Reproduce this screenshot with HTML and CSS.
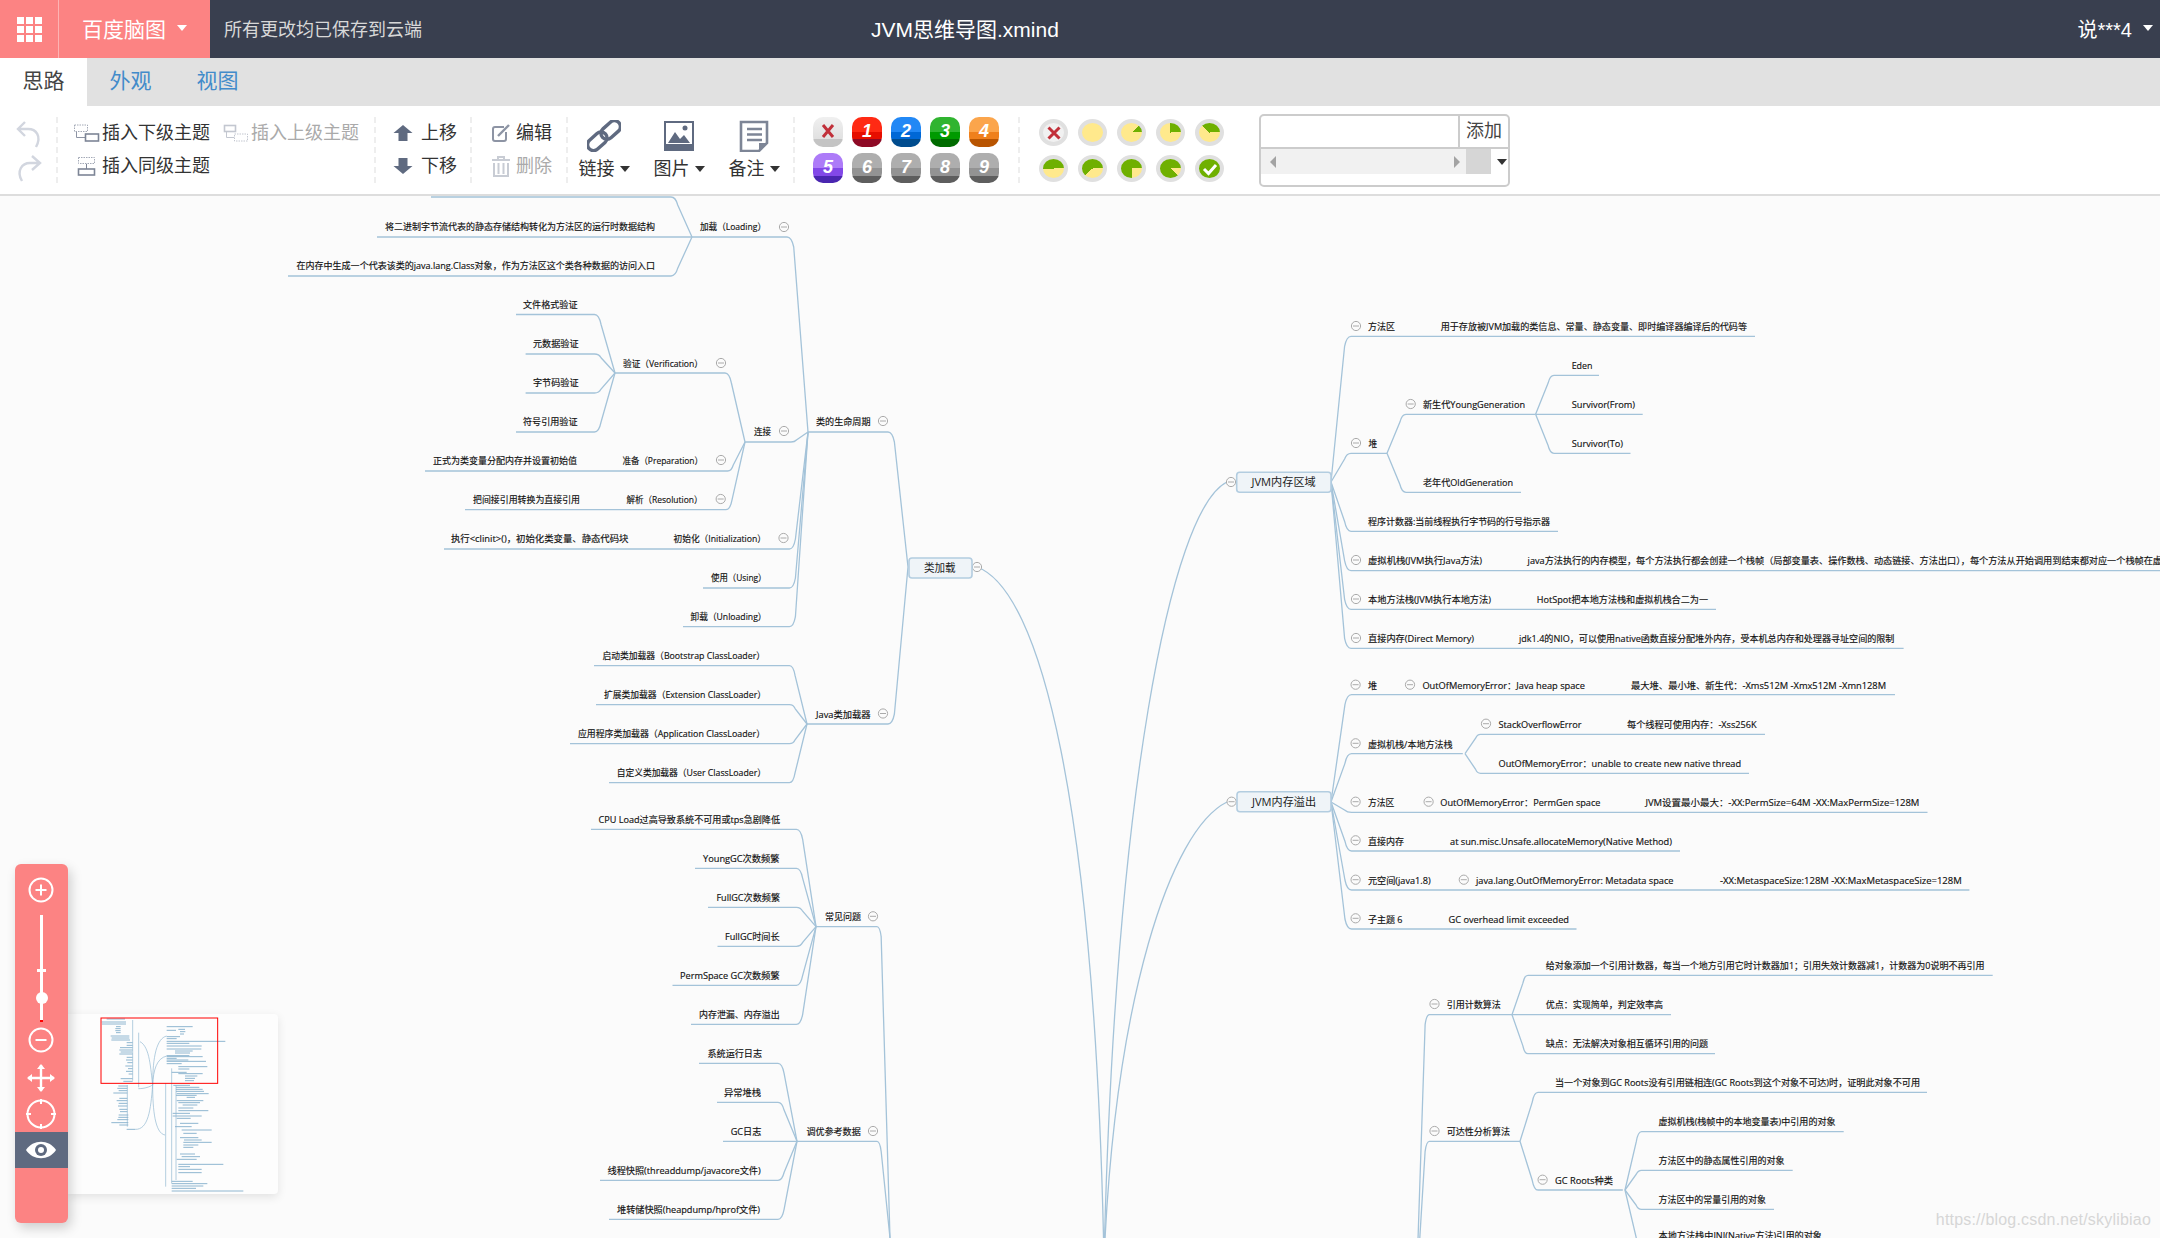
FILE: index.html
```html
<!doctype html>
<html lang="zh-CN">

<head>
  <meta charset="UTF-8">
  <title>JVM思维导图.xmind</title>
  <link rel="stylesheet" href="styles.css">
</head>

<body>
  <header class="header">
    <button class="header__apps" type="button">
      <span class="header__apps-grid">
        <i></i><i></i><i></i><i></i><i></i><i></i><i></i><i></i><i></i>
      </span>
    </button>
    <div class="header__brand">百度脑图<span class="caret caret--white"></span></div>
    <div class="header__saved">所有更改均已保存到云端</div>
    <div class="header__title">JVM思维导图.xmind</div>
    <div class="header__user">说***4<span class="caret caret--white"></span></div>
  </header>

  <nav class="tabs">
    <a class="tabs__item tabs__item--active">思路</a>
    <a class="tabs__item">外观</a>
    <a class="tabs__item">视图</a>
  </nav>

  <section class="toolbar">
    <div class="group group--history">
      <svg class="history-icon" width="26" height="28" viewBox="0 0 26 28" fill="none">
        <path d="M9 2L2 9L9 16M2 9H12C20 9 26 16 20 27" stroke="#d2d6df" stroke-width="2.4" />
      </svg>
      <svg class="history-icon" width="26" height="28" viewBox="0 0 26 28" fill="none">
        <path d="M16 2L24 9L16 16M24 9H14C6 9 0 17 6 27" stroke="#d2d6df" stroke-width="2.4" />
      </svg>
    </div>

    <div class="group group--insert">
      <div class="tool">
        <svg class="tool__icon" width="28" height="20" viewBox="0 0 28 20" fill="none">
          <rect x="1.500" y="2" width="13" height="6.500" stroke="#a3a9b6" stroke-dasharray="1.500 1" />
          <path d="M3.500 9V14.500H12" stroke="#8d94a4" />
          <rect x="12.500" y="11" width="13" height="7" stroke="#7d8596" stroke-width="1.600" />
        </svg>
        插入下级主题
      </div>
      <div class="tool tool--off">
        <svg class="tool__icon" width="28" height="20" viewBox="0 0 28 20" fill="none">
          <rect x="2.500" y="2.500" width="11" height="6" stroke="#c3c7d0" stroke-width="1.600" />
          <path d="M4.500 9V14.500H12" stroke="#c3c7d0" />
          <rect x="12.500" y="11" width="13" height="7" stroke="#c3c7d0" stroke-dasharray="1.500 1" />
        </svg>
        插入上级主题
      </div>
      <div class="tool">
        <svg class="tool__icon" width="28" height="20" viewBox="0 0 28 20" fill="none">
          <rect x="5.500" y="1.500" width="16" height="6" stroke="#a3a9b6" stroke-dasharray="1.500 1" />
          <path d="M13.500 8V13" stroke="#7d8596" />
          <rect x="5.500" y="13" width="16" height="6" stroke="#7d8596" stroke-width="1.600" />
        </svg>
        插入同级主题
      </div>
    </div>

    <div class="group group--move">
      <div class="tool">
        <svg class="tool__icon" width="20" height="16" viewBox="0 0 20 16">
          <path d="M10 0L19.500 8H14.500V16H5.500V8H0.500Z" fill="#5f6a80" />
        </svg>
        上移
      </div>
      <div class="tool">
        <svg class="tool__icon" width="20" height="16" viewBox="0 0 20 16">
          <path d="M10 16L19.500 8H14.500V0H5.500V8H0.500Z" fill="#5f6a80" />
        </svg>
        下移
      </div>
    </div>

    <div class="group group--edit">
      <div class="tool">
        <svg class="tool__icon" width="22" height="20" viewBox="0 0 22 20" fill="none">
          <path d="M14 4H5Q3 4 3 6V16Q3 18 5 18H14Q16 18 16 16V9" stroke="#8d94a4" stroke-width="2" />
          <path d="M8 13L19 2" stroke="#8d94a4" stroke-width="2.400" />
        </svg>
        编辑
      </div>
      <div class="tool tool--off">
        <svg class="tool__icon" width="22" height="22" viewBox="0 0 22 22" fill="none">
          <path d="M2 5H20M8 5V2H14V5M4 8V21H18V8M8.500 8V19M13.500 8V19" stroke="#c8ccd4" stroke-width="2" />
        </svg>
        删除
      </div>
    </div>

    <div class="group group--insert-big">
      <div class="big-tool">
        <svg class="big-tool__icon" width="34" height="32" viewBox="0 0 34 32" fill="none">
          <rect x="-11" y="-6" width="22" height="12" rx="6" transform="translate(10.300 21.300) rotate(-42)" stroke="#5f6a80" stroke-width="3.400" />
          <rect x="-11" y="-6" width="22" height="12" rx="6" transform="translate(23.700 10) rotate(-42)" stroke="#5f6a80" stroke-width="3.400" />
        </svg>
        <span class="big-tool__label">链接<span class="caret"></span></span>
      </div>
      <div class="big-tool">
        <svg class="big-tool__icon" width="30" height="32" viewBox="0 0 30 32">
          <path d="M0 1H30V31H0Z" fill="#5f6a80" />
          <path d="M2 3H28V24H2Z" fill="#fff" />
          <path d="M4 23L11 12L16 19L20 15L26 23Z" fill="#5f6a80" />
          <circle cx="21" cy="8" r="2.500" fill="#5f6a80" />
        </svg>
        <span class="big-tool__label">图片<span class="caret"></span></span>
      </div>
      <div class="big-tool">
        <svg class="big-tool__icon" width="30" height="32" viewBox="0 0 30 32" fill="none">
          <path d="M2 2H28V23L20 31H2Z" stroke="#7d8596" stroke-width="2.600" />
          <path d="M20 31V23H28Z" fill="#7d8596" />
          <path d="M8 9H23M8 14.500H23M8 20H23" stroke="#7d8596" stroke-width="2.600" />
        </svg>
        <span class="big-tool__label">备注<span class="caret"></span></span>
      </div>
    </div>

    <div class="group group--priority">
      <span class="priority priority--none">
        <svg width="14" height="16" viewBox="0 0 14 16" fill="none">
          <path d="M2 2L12 14M12 2L2 14" stroke="#c1303a" stroke-width="3" />
        </svg>
      </span>
      <span class="priority priority--red">1</span>
      <span class="priority priority--blue">2</span>
      <span class="priority priority--green">3</span>
      <span class="priority priority--orange">4</span>
      <span class="priority priority--purple">5</span>
      <span class="priority priority--grey">6</span>
      <span class="priority priority--grey">7</span>
      <span class="priority priority--grey">8</span>
      <span class="priority priority--grey">9</span>
    </div>

    <div class="group group--progress">
      <span class="progress progress--none">
        <svg width="16" height="16" viewBox="0 0 16 16" fill="none">
          <path d="M2.500 2.500L13.500 13.500M13.500 2.500L2.500 13.500" stroke="#c1303a" stroke-width="3" />
        </svg>
      </span>
      <span class="progress"></span>
      <span class="progress progress--45"></span>
      <span class="progress progress--90"></span>
      <span class="progress progress--135"></span>
      <span class="progress progress--180"></span>
      <span class="progress progress--225"></span>
      <span class="progress progress--270"></span>
      <span class="progress progress--315"></span>
      <span class="progress progress--done">
        <svg width="16" height="14" viewBox="0 0 16 14" fill="none">
          <path d="M2 7L6.500 11.500L14 3" stroke="#fff" stroke-width="3" />
        </svg>
      </span>
    </div>

    <div class="resource">
      <div class="resource__top">
        <div class="resource__input"></div>
        <div class="resource__add">添加</div>
      </div>
      <div class="resource__list">
        <div class="resource__track">
          <span class="resource__arrow resource__arrow--left"></span>
          <span class="resource__arrow resource__arrow--right"></span>
        </div>
        <div class="resource__thumb"></div>
        <div class="resource__drop"><span class="caret"></span></div>
      </div>
    </div>
  </section>

  <main class="canvas">
    <svg class="map" id="js-map" width="2160" height="1042" viewBox="0 196 2160 1042"></svg>

    <div class="watermark">https://blog.csdn.net/skylibiao</div>

    <div class="minimap">
      <svg id="js-minimap" width="210" height="180" viewBox="204 492 630 540"></svg>
    </div>

    <div class="nav">
      <button class="nav__btn nav__btn--first" type="button">
        <svg width="30" height="30" viewBox="0 0 30 30" fill="none">
          <circle cx="15" cy="15" r="11.500" stroke="#fff" stroke-width="2" />
          <path d="M9.500 15H20.500M15 9.500V20.500" stroke="#fff" stroke-width="2" />
        </svg>
      </button>
      <div class="nav__slider">
        <span class="nav__tick"></span>
        <span class="nav__knob"></span>
        <span class="nav__tail"></span>
      </div>
      <button class="nav__btn" type="button">
        <svg width="30" height="30" viewBox="0 0 30 30" fill="none">
          <circle cx="15" cy="15" r="11.500" stroke="#fff" stroke-width="2" />
          <path d="M9.500 15H20.500" stroke="#fff" stroke-width="2" />
        </svg>
      </button>
      <button class="nav__btn nav__btn--move" type="button">
        <svg width="32" height="32" viewBox="0 0 32 32" fill="none">
          <path d="M16 3V29M3 16H29" stroke="#fff" stroke-width="2.400" />
          <path d="M12 7L16 2L20 7ZM12 25L16 30L20 25ZM7 12L2 16L7 20ZM25 12L30 16L25 20Z" fill="#fff" />
        </svg>
      </button>
      <button class="nav__btn" type="button">
        <svg width="32" height="32" viewBox="0 0 32 32" fill="none">
          <circle cx="16" cy="16" r="13.500" stroke="#fff" stroke-width="2" />
          <path d="M16 1V6M16 26V31M1 16H6M26 16H31" stroke="#fff" stroke-width="2" />
        </svg>
      </button>
      <button class="nav__btn nav__btn--eye" type="button">
        <svg width="32" height="24" viewBox="0 0 32 24">
          <path d="M1 12C8 1 24 1 31 12C24 23 8 23 1 12Z" fill="#fff" />
          <circle cx="16" cy="12" r="6" fill="#5f6a80" />
          <circle cx="16" cy="12" r="3" fill="#fff" />
        </svg>
      </button>
    </div>
  </main>

  <script src="map.js"></script>
</body>

</html>
```

FILE: styles.css
```css
* {
  box-sizing: border-box;
}

html,
body {
  margin: 0;
  height: 100%;
}

body {
  display: flex;
  flex-direction: column;
  overflow: hidden;
  background-color: #fbfbfb;
  color: #333;
  font-family: "Liberation Sans", "Noto Sans CJK SC", sans-serif;
}

button {
  padding: 0;
  border: none;
  background: none;
}

/* header */
.header {
  display: flex;
  flex: none;
  align-items: center;
  height: 58px;
  background-color: #393f4f;
  color: #fff;
}

.header__apps {
  display: flex;
  align-items: center;
  justify-content: center;
  width: 59px;
  height: 100%;
  border-right: 1px solid #fdb3b3;
  background-color: #fc8383;
}

.header__apps-grid {
  display: grid;
  grid-template-columns: repeat(3, 7px);
  gap: 2px;
}

.header__apps-grid i {
  height: 7px;
  background-color: #fff;
}

.header__brand {
  display: flex;
  align-items: center;
  width: 151px;
  height: 100%;
  padding: 0 0 2px 23px;
  background-color: #fc8383;
  font-size: 21px;
}

.header__saved {
  margin: 0 0 2px 14px;
  color: #d8d8d8;
  font-size: 18px;
}

.header__title {
  margin: 0 0 2px 449px;
  font-size: 21px;
}

.header__user {
  display: flex;
  align-items: center;
  margin: 0 0 2px auto;
  padding-right: 7px;
  font-size: 20px;
}

.caret {
  display: inline-block;
  width: 0;
  height: 0;
  margin-left: 5px;
  border-top: 6px solid #333;
  border-right: 5px solid transparent;
  border-left: 5px solid transparent;
}

.caret--white {
  margin-left: 11px;
  border-top-color: #fff;
}

/* tabs */
.tabs {
  display: flex;
  flex: none;
  height: 48px;
  background-color: #e1e1e1;
}

.tabs__item {
  width: 87px;
  color: #428bca;
  font-size: 21px;
  line-height: 46px;
  text-align: center;
}

.tabs__item--active {
  background-color: #fff;
  color: #444;
}

/* toolbar */
.toolbar {
  display: flex;
  flex: none;
  height: 90px;
  padding-top: 11px;
  border-bottom: 2px solid #ddd;
  background-color: #fff;
  font-size: 18px;
  line-height: 1;
}

.group {
  height: 66px;
  border-left: 2px dashed #eee;
}

.group--history {
  display: flex;
  flex-direction: column;
  gap: 6px;
  width: 56px;
  padding: 3px 0 0 16px;
  border-left: none;
}

.group--insert {
  display: grid;
  grid-template-columns: 136px 136px;
  grid-auto-rows: 33px;
  column-gap: 13px;
  width: 318px;
  padding-left: 15px;
}

.group--move,
.group--edit {
  display: grid;
  grid-auto-rows: 33px;
  width: 96px;
}

.group--move {
  padding-left: 17px;
}

.group--move .tool__icon {
  margin-right: 8px;
}

.group--edit {
  padding-left: 18px;
}

.group--edit .tool__icon {
  margin-right: 4px;
}

.tool {
  display: flex;
  align-items: center;
  padding-bottom: 2px;
  color: #333;
  white-space: nowrap;
}

.tool__icon {
  flex: none;
  margin-right: 1px;
}

.tool--off {
  color: #aaa;
}

.group--insert-big {
  display: flex;
  gap: 23px;
  width: 227px;
  padding-left: 10px;
}

.big-tool {
  display: flex;
  flex-direction: column;
  align-items: center;
  width: 52px;
  padding-top: 3px;
}

.big-tool__icon {
  flex: none;
}

.big-tool__label {
  display: flex;
  align-items: center;
  margin-top: 8px;
}

.group--priority {
  display: grid;
  grid-template-columns: repeat(5, 30px);
  grid-auto-rows: 30px;
  gap: 6px 9px;
  width: 225px;
  padding-left: 18px;
}

.priority {
  display: flex;
  align-items: center;
  justify-content: center;
  padding-bottom: 3px;
  border-radius: 10px;
  color: #fff;
  font-size: 18px;
  font-style: italic;
  font-weight: 700;
}

.priority--none {
  background: linear-gradient(#f0f0f0, #e0e0e0 75%, #c4c4c4 75%);
}

.priority--red {
  background: linear-gradient(#ff2a14 50%, #e60e00 50% 75%, #8e0a25 75%);
}

.priority--blue {
  background: linear-gradient(#2288f5 50%, #0068d6 50% 75%, #004c8e 75%);
}

.priority--green {
  background: linear-gradient(#30b430 50%, #009a00 50% 75%, #006b00 75%);
}

.priority--orange {
  background: linear-gradient(#fba54c 50%, #ef801c 50% 75%, #b85400 75%);
}

.priority--purple {
  background: linear-gradient(#ad7bf8 50%, #8248e8 50% 75%, #4a26b0 75%);
}

.priority--grey {
  background: linear-gradient(#aeaeae 50%, #939393 50% 75%, #5e5e5e 75%);
}

.group--progress {
  display: grid;
  grid-template-columns: repeat(5, 29px);
  grid-auto-rows: 27px;
  gap: 9px 10px;
  width: 225px;
  padding: 2px 0 0 19px;
}

.progress {
  display: flex;
  align-items: center;
  justify-content: center;
  border: 4px solid #e0e0e0;
  border-radius: 50%;
  background: #ffe98c;
}

.progress--45 {
  background: conic-gradient(#ffe98c 0 45deg, #6fb000 45deg 90deg, #ffe98c 90deg);
}

.progress--90 {
  background: conic-gradient(#6fb000 0 90deg, #ffe98c 90deg);
}

.progress--135 {
  background: conic-gradient(#6fb000 0 90deg, #ffe98c 90deg 315deg, #6fb000 315deg);
}

.progress--180 {
  background: conic-gradient(#6fb000 0 90deg, #ffe98c 90deg 270deg, #6fb000 270deg);
}

.progress--225 {
  background: conic-gradient(#6fb000 0 90deg, #ffe98c 90deg 225deg, #6fb000 225deg);
}

.progress--270 {
  background: conic-gradient(#6fb000 0 90deg, #ffe98c 90deg 180deg, #6fb000 180deg);
}

.progress--315 {
  background: conic-gradient(#6fb000 0 90deg, #ffe98c 90deg 135deg, #6fb000 135deg);
}

.progress--none {
  background: #f1f1f1;
}

.progress--done {
  background: #6fb000;
}

.resource {
  flex: none;
  width: 251px;
  height: 73px;
  margin: -3px 0 0 16px;
  border: 2px solid #ccc;
  border-radius: 5px;
  background-color: #fff;
}

.resource__top {
  display: flex;
  height: 33px;
  border-bottom: 2px solid #ccc;
}

.resource__input {
  width: 199px;
  border-right: 2px solid #ccc;
}

.resource__add {
  flex: 1;
  color: #444;
  line-height: 31px;
  text-align: center;
}

.resource__list {
  display: flex;
  height: 25px;
}

.resource__track {
  display: flex;
  align-items: center;
  justify-content: space-between;
  width: 205px;
  padding: 0 6px 0 9px;
  background-color: #f1f1f1;
}

.resource__arrow {
  width: 0;
  height: 0;
  border-top: 6px solid transparent;
  border-bottom: 6px solid transparent;
}

.resource__arrow--left {
  border-right: 6px solid #a3a3a3;
}

.resource__arrow--right {
  border-left: 6px solid #a3a3a3;
}

.resource__thumb {
  width: 25px;
  background-color: #d6d6d6;
}

.resource__drop {
  display: flex;
  flex: 1;
  align-items: center;
  justify-content: center;
}

/* mind map */
.canvas {
  position: relative;
  flex: 1;
  overflow: hidden;
  background-color: #fbfbfb;
}

.map {
  display: block;
}

.map-line {
  fill: none;
  stroke: #a4c3d9;
  stroke-width: 1.3;
}

.map-text {
  fill: #111;
  stroke: #111;
  stroke-width: 0.15;
  font-family: "Open Sans", "Noto Sans CJK SC", sans-serif;
  font-size: 9px;
}

.map-toggle {
  fill: #fbfbfb;
  stroke: #aaa;
  stroke-width: 1;
}

.map-box {
  fill: #eff4f8;
  stroke: #b3cde0;
  stroke-width: 1.6;
}

.map-root-text {
  fill: #222;
  font-family: "Open Sans", "Noto Sans CJK SC", sans-serif;
  font-size: 11px;
}

.watermark {
  position: absolute;
  right: 9px;
  bottom: 9px;
  color: #d6d6d6;
  font-size: 16px;
  letter-spacing: 0.2px;
}

/* navigator */
.nav {
  position: absolute;
  top: 668px;
  left: 15px;
  display: flex;
  flex-direction: column;
  align-items: center;
  width: 53px;
  height: 359px;
  border-radius: 6px;
  background-color: #fc8383;
  box-shadow: 3px 5px 12px rgba(0, 0, 0, 0.18);
}

.nav__btn {
  display: flex;
  flex: none;
  align-items: center;
  justify-content: center;
  width: 100%;
  height: 36px;
  padding-right: 1px;
}

.nav__btn--first {
  margin-top: 8px;
}

.nav__btn--move {
  margin-top: 2px;
}

.nav__btn--eye {
  background-color: #5f6a80;
}

.nav__slider {
  position: relative;
  flex: none;
  width: 3px;
  height: 107px;
  margin-top: 7px;
  background-color: #fff;
}

.nav__tick {
  position: absolute;
  top: 54px;
  left: -3px;
  width: 9px;
  height: 3px;
  background-color: #fff;
}

.nav__knob {
  position: absolute;
  top: 77px;
  left: -4.5px;
  width: 12px;
  height: 12px;
  border-radius: 50%;
  background-color: #fff;
}

.nav__tail {
  position: absolute;
  bottom: 0;
  left: 0;
  width: 3px;
  height: 2px;
  background-color: #f00;
}

.minimap {
  position: absolute;
  top: 818px;
  left: 68px;
  width: 210px;
  height: 180px;
  overflow: hidden;
  border-radius: 0 4px 4px 0;
  background-color: #fdfdfd;
  box-shadow: 0 3px 10px rgba(0, 0, 0, 0.1);
}

.minimap svg {
  display: block;
}

.mini-bar {
  fill: none;
  stroke: #8fb6d0;
  stroke-width: 3;
}

.mini-line {
  fill: none;
  stroke: #8fb6d0;
  stroke-width: 2;
}

.mini-view {
  fill: none;
  stroke: #f00;
  stroke-width: 3;
}
```

FILE: map.js
```js
const NS = 'http://www.w3.org/2000/svg';
const map = document.getElementById('js-map');
const mini = document.getElementById('js-minimap');

function add(parent, tag, attrs, text) {
  const el = document.createElementNS(NS, tag);
  Object.keys(attrs).forEach(function (key) {
    el.setAttribute(key, attrs[key]);
  });
  if (text) el.textContent = text;
  parent.appendChild(el);
  return el;
}

// underline from x0 to xc at height y, then a tight corner and a run to the hub
function edge(x0, xc, y, hx, hy) {
  const dx = hx - xc;
  const dy = hy - y;
  if (Math.abs(dy) < 1) return 'M' + x0 + ' ' + y + 'L' + hx + ' ' + hy;
  const s = dy > 0 ? 1 : -1;
  const bend = Math.min(Math.abs(dy) * 0.2, 10) * s;
  return 'M' + x0 + ' ' + y + 'L' + xc + ' ' + y +
    'Q' + (xc + dx * 0.22) + ' ' + y + ' ' + (xc + dx * 0.32) + ' ' + (y + bend) +
    'L' + hx + ' ' + hy;
}

// [hubX, hubY, [[x0, xc, y], ...]]
const branches = [
  [692, 237, [[431, 671, 197], [377, 670, 237], [288, 671, 276]]],
  [808, 432, [[692, 787, 237], [745, 791, 442], [444, 789.5, 549], [703, 789.5, 588], [683, 789.5, 626.7]]],
  [615, 373, [[516, 594.5, 314.5], [525.6, 594.5, 354], [525.6, 594.5, 393], [516, 594.5, 432]]],
  [745, 442, [[615, 725, 373], [425, 727.6, 471], [465, 726, 509.7]]],
  [908, 567, [[808, 888, 432], [807, 888, 724]]],
  [807, 724, [[594, 789.5, 665.7], [596, 789.5, 704.7], [570, 789.5, 743.7], [609, 789.5, 782.7]]],
  [816, 926.7, [[591, 796.4, 829.3], [695, 796.4, 868.3], [708, 796.4, 907.3], [717.5, 796.4, 946.3], [672.5, 796.4, 985.3], [691, 796.4, 1024.3]]],
  [797, 1141.3, [[699, 778, 1063.3], [717, 778, 1102.3], [723, 778, 1141.3], [600, 778, 1180.3], [609, 778, 1219.3]]],
  [890, 1238, [[816, 877, 926.7], [797, 877, 1141.3]]],
  [1331, 482, [[1755, 1351, 336.3], [1387, 1351, 453.3], [1558, 1351, 531.3], [2170, 1351, 570.7], [1716, 1351, 609.3], [1903.6, 1351, 648.3]]],
  [1387, 453.3, [[1535.6, 1406, 414.3], [1521, 1406, 492.3]]],
  [1535.6, 414.3, [[1599, 1554, 375.3], [1642.7, 1554, 414.3], [1630.5, 1554, 453.3]]],
  [1331, 802, [[1895, 1351.5, 694.7], [1462.8, 1351.5, 753.7], [1927.5, 1351.5, 812.3], [1680, 1351.5, 851], [1969.4, 1351.5, 890], [1576.5, 1351.5, 929]]],
  [1465, 753.7, [[1765, 1480.6, 734.3], [1749, 1480.6, 773.3]]],
  [1512, 1014.7, [[1992.7, 1528, 975.3], [1671, 1528, 1014.7], [1715, 1528, 1053.7]]],
  [1520, 1141.3, [[1927, 1538, 1092.3], [1622.8, 1538, 1190]]],
  [1625, 1190, [[1843.7, 1641.6, 1131.7], [1792.7, 1641.6, 1170.3], [1774, 1641.6, 1209.3], [1840, 1641.6, 1248]]],
  [1416, 1300, [[1520, 1429.4, 1141.3], [1512, 1429.4, 1014.7]]]
];

branches.forEach(function (branch) {
  branch[2].forEach(function (line) {
    add(map, 'path', { class: 'map-line', d: edge(line[0], line[1], line[2], branch[0], branch[1]) });
  });
});

// long curves running down to the root topic below the fold
add(map, 'path', { class: 'map-line', d: 'M977 567C1040 590 1095 800 1104 1260' });
add(map, 'path', { class: 'map-line', d: 'M1227 482C1170 510 1115 800 1104 1260' });
add(map, 'path', { class: 'map-line', d: 'M1227 802C1170 830 1115 1000 1104 1260' });

// [text, x start, x end, centre y]
const topics = [
  ['将二进制字节流代表的静态存储结构转化为方法区的运行时数据结构', 385, 655, 227],
  ['在内存中生成一个代表该类的java.lang.Class对象，作为方法区这个类各种数据的访问入口', 296.5, 655, 266],
  ['加载（Loading）', 700, 766, 227],
  ['文件格式验证', 523, 577.5, 305],
  ['元数据验证', 533, 578.5, 344],
  ['字节码验证', 533, 578.5, 383],
  ['符号引用验证', 523, 577.5, 422],
  ['验证（Verification）', 623, 703, 364],
  ['连接', 754, 771, 432],
  ['类的生命周期', 816, 870.5, 422],
  ['正式为类变量分配内存并设置初始值', 433, 577, 461],
  ['准备（Preparation）', 622.5, 703, 461],
  ['把间接引用转换为直接引用', 473, 580, 500],
  ['解析（Resolution）', 626.6, 702.5, 500],
  ['执行<clinit>()，初始化类变量、静态代码块', 451, 628.5, 539],
  ['初始化（Initialization）', 673.6, 766, 539],
  ['使用（Using）', 711, 766.5, 578],
  ['卸载（Unloading）', 690.6, 766.5, 617],
  ['启动类加载器（Bootstrap ClassLoader）', 602.5, 765, 655.7],
  ['扩展类加载器（Extension ClassLoader）', 604, 766, 694.7],
  ['应用程序类加载器（Application ClassLoader）', 578, 765, 733.7],
  ['自定义类加载器（User ClassLoader）', 616.7, 766, 772.7],
  ['Java类加载器', 816, 870.6, 714.7],
  ['CPU Load过高导致系统不可用或tps急剧降低', 598.6, 780, 819.7],
  ['YoungGC次数频繁', 703, 779.6, 858.7],
  ['FullGC次数频繁', 716.4, 780, 897.7],
  ['FullGC时间长', 725, 779.6, 936.7],
  ['PermSpace GC次数频繁', 680, 779.6, 975.7],
  ['内存泄漏、内存溢出', 699, 779.6, 1015],
  ['常见问题', 825, 861, 916.7],
  ['系统运行日志', 707.5, 762, 1054],
  ['异常堆栈', 724, 761, 1093],
  ['GC日志', 730.7, 761.4, 1131.7],
  ['线程快照(threaddump/javacore文件)', 607.5, 760.7, 1170.7],
  ['堆转储快照(heapdump/hprof文件)', 617, 760, 1209.7],
  ['调优参考数据', 806.4, 860.7, 1132],
  ['方法区', 1368, 1395, 327],
  ['用于存放被JVM加载的类信息、常量、静态变量、即时编译器编译后的代码等', 1440.7, 1747, 327],
  ['Eden', 1571.7, 1592.5, 365.7],
  ['Survivor(From)', 1571.7, 1635, 404.7],
  ['Survivor(To)', 1571.7, 1623, 443.7],
  ['新生代YoungGeneration', 1423, 1525, 404.7],
  ['堆', 1368.4, 1377, 443.7],
  ['老年代OldGeneration', 1423, 1513, 482.7],
  ['程序计数器:当前线程执行字节码的行号指示器', 1368, 1550, 522],
  ['虚拟机栈(JVM执行Java方法)', 1368, 1482, 561],
  ['java方法执行的内存模型，每个方法执行都会创建一个栈帧（局部变量表、操作数栈、动态链接、方法出口），每个方法从开始调用到结束都对应一个栈帧在虚', 1527.6, 2162, 561],
  ['本地方法栈(JVM执行本地方法)', 1368, 1491, 600],
  ['HotSpot把本地方法栈和虚拟机栈合二为一', 1536.8, 1708, 600],
  ['直接内存(Direct Memory)', 1368, 1474, 639],
  ['jdk1.4的NIO，可以使用native函数直接分配堆外内存，受本机总内存和处理器寻址空间的限制', 1519, 1894.4, 639],
  ['堆', 1368, 1377, 686],
  ['OutOfMemoryError：Java heap space', 1422.4, 1585, 686],
  ['最大堆、最小堆、新生代：-Xms512M -Xmx512M -Xmn128M', 1631, 1886, 686],
  ['StackOverflowError', 1498.5, 1581.6, 724.7],
  ['每个线程可使用内存：-Xss256K', 1627, 1756.6, 724.7],
  ['OutOfMemoryError：unable to create new native thread', 1498.5, 1741, 763.7],
  ['虚拟机栈/本地方法栈', 1368, 1452.5, 744.3],
  ['方法区', 1368, 1394.4, 803],
  ['OutOfMemoryError：PermGen space', 1440.3, 1600.5, 803],
  ['JVM设置最小最大：-XX:PermSize=64M -XX:MaxPermSize=128M', 1645.4, 1919.4, 803],
  ['直接内存', 1368, 1404, 841.7],
  ['at sun.misc.Unsafe.allocateMemory(Native Method)', 1450, 1672, 841.7],
  ['元空间(java1.8)', 1368, 1430.6, 880.7],
  ['java.lang.OutOfMemoryError: Metadata space', 1476, 1673.5, 880.7],
  ['-XX:MetaspaceSize:128M -XX:MaxMetaspaceSize=128M', 1720, 1961.7, 880.7],
  ['子主题 6', 1368, 1402.5, 919.7],
  ['GC overhead limit exceeded', 1448.5, 1569, 919.7],
  ['给对象添加一个引用计数器，每当一个地方引用它时计数器加1；引用失效计数器减1，计数器为0说明不再引用', 1545.7, 1984.5, 966],
  ['优点：实现简单，判定效率高', 1545.7, 1663, 1005],
  ['缺点：无法解决对象相互循环引用的问题', 1545.7, 1708, 1044],
  ['引用计数算法', 1446.7, 1500.8, 1005],
  ['当一个对象到GC Roots没有引用链相连(GC Roots到这个对象不可达)时，证明此对象不可用', 1555, 1920, 1083],
  ['可达性分析算法', 1446.7, 1510, 1131.7],
  ['虚拟机栈(栈帧中的本地变量表)中引用的对象', 1658.5, 1835.5, 1122],
  ['方法区中的静态属性引用的对象', 1658.5, 1784.5, 1161],
  ['方法区中的常量引用的对象', 1658.5, 1766, 1200],
  ['本地方法栈中JNI(Native方法)引用的对象', 1658.5, 1822, 1236],
  ['GC Roots种类', 1555, 1613, 1180.7]
];

topics.forEach(function (t) {
  add(map, 'text', {
    class: 'map-text',
    x: t[1],
    y: t[3] + 3.2,
    textLength: t[2] - t[1],
    lengthAdjust: 'spacingAndGlyphs'
  }, t[0]);
});

const toggles = [
  [784, 227], [721, 363], [784, 431], [883, 421], [721, 460], [720.7, 499], [783.5, 538], [883, 713.5],
  [873, 916.3], [873, 1131], [977, 567], [1231, 482], [1231.6, 801.7],
  [1356, 326], [1356, 443], [1410.7, 404], [1356, 560], [1356, 599], [1356, 638],
  [1355.6, 684.7], [1410, 684.7], [1486, 723.7], [1355.6, 743.3], [1355.6, 801.7], [1428.6, 801.7],
  [1355.6, 840.3], [1355.6, 879.7], [1463.8, 879.7], [1355.6, 918.3],
  [1434.5, 1004], [1434.5, 1131], [1542.6, 1179.7]
];

toggles.forEach(function (t) {
  add(map, 'circle', { class: 'map-toggle', cx: t[0], cy: t[1], r: 4.6 });
  add(map, 'path', { class: 'map-toggle', d: 'M' + (t[0] - 3) + ' ' + t[1] + 'H' + (t[0] + 3) });
});

// [text, box x, box y, box w, text start, text end]
const roots = [
  ['类加载', 909, 558, 63, 924, 955.6],
  ['JVM内存区域', 1236.7, 472.3, 94.3, 1251.4, 1315.7],
  ['JVM内存溢出', 1237, 791.7, 94, 1252, 1316]
];

roots.forEach(function (r) {
  add(map, 'rect', { class: 'map-box', x: r[1], y: r[2], width: r[3], height: 20, rx: 3 });
  add(map, 'text', {
    class: 'map-root-text',
    x: r[4],
    y: r[2] + 14,
    textLength: r[5] - r[4],
    lengthAdjust: 'spacingAndGlyphs'
  }, r[0]);
});

// minimap, in its own coordinates: [x1, x2, y]
const miniBars = [
  [320, 375, 507], [305, 378, 516], [306, 378, 522],
  [348, 362, 530], [346, 362, 536], [346, 362, 542], [348, 362, 548], [332, 388, 558], [335, 388, 564], [334, 390, 570],
  [380, 398, 578], [380, 398, 586], [360, 398, 593], [358, 398, 600], [362, 396, 606], [358, 398, 612],
  [380, 398, 622], [378, 398, 630], [382, 398, 638], [376, 398, 648], [384, 398, 656], [378, 398, 664], [386, 398, 672],
  [362, 398, 686], [370, 398, 694], [355, 382, 708], [352, 382, 715], [356, 382, 722], [340, 382, 729],
  [358, 382, 745], [350, 382, 752], [356, 382, 760], [354, 382, 768], [358, 382, 778], [360, 382, 785],
  [356, 385, 795], [355, 385, 802], [352, 385, 809], [334, 385, 818], [358, 385, 825], [380, 405, 838],
  [500, 578, 530], [500, 528, 541], [535, 555, 538], [540, 556, 545], [540, 552, 552], [500, 540, 560], [500, 530, 566],
  [500, 676, 574], [500, 568, 580], [500, 605, 588], [500, 604, 597], [525, 578, 603], [525, 570, 609], [500, 568, 617],
  [500, 608, 620], [500, 530, 625], [500, 565, 630], [500, 618, 634], [500, 545, 641],
  [535, 622, 650], [535, 568, 657], [515, 560, 667], [535, 608, 671], [555, 592, 678], [555, 585, 685], [555, 582, 692],
  [520, 570, 706], [528, 598, 712], [528, 608, 718], [528, 612, 724], [530, 626, 731], [528, 590, 736], [560, 585, 742],
  [530, 610, 752], [535, 600, 758], [548, 592, 765], [535, 580, 774], [535, 625, 782], [518, 570, 790], [518, 605, 798],
  [530, 572, 805], [540, 595, 820], [525, 575, 830], [545, 635, 840], [550, 590, 850], [540, 595, 863], [552, 605, 870],
  [550, 635, 877], [550, 595, 885], [550, 580, 892], [540, 585, 912], [545, 600, 920], [530, 590, 928], [535, 670, 943],
  [535, 570, 950], [535, 605, 958], [535, 605, 968], [515, 578, 994], [515, 622, 1001], [515, 610, 1008], [515, 588, 1015],
  [515, 730, 1023]
];

miniBars.forEach(function (b) {
  add(mini, 'path', { class: 'mini-bar', d: 'M' + b[0] + ' ' + b[2] + 'H' + b[1] });
});

const miniLines = [
  'M398 510V692', 'M416 548V712', 'M382 705V830', 'M497 700V1010', 'M515 655V1000', 'M528 706V990',
  'M420 575C450 590 452 660 458 705', 'M405 838C445 840 452 780 458 705',
  'M500 558C470 565 458 620 458 705', 'M500 618C470 625 460 660 458 705',
  'M495 855C465 850 458 780 458 705', 'M415 716C435 716 450 710 458 705'
];

miniLines.forEach(function (d) {
  add(mini, 'path', { class: 'mini-line', d: d });
});

add(mini, 'rect', { class: 'mini-view', x: 303, y: 504, width: 350, height: 196 });
```
